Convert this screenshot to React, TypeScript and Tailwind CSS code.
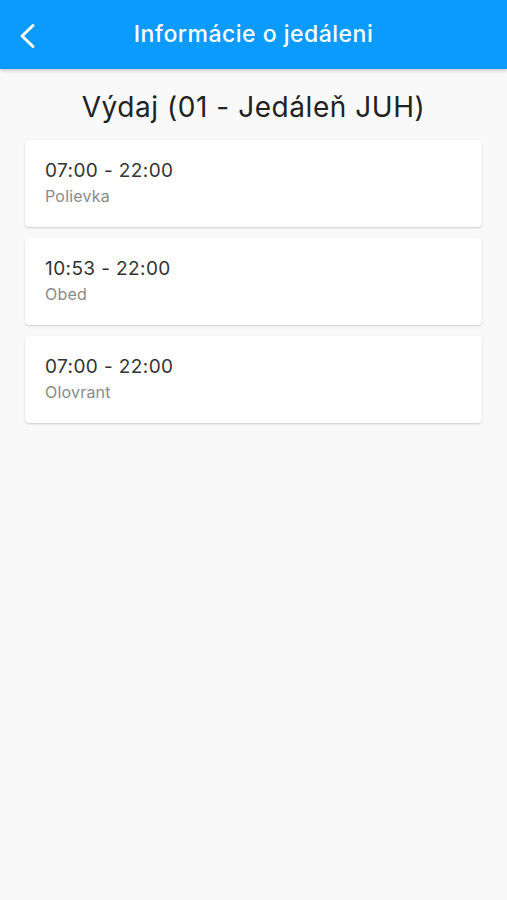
const items = [
  { time: "07:00 - 22:00", label: "Polievka" },
  { time: "10:53 - 22:00", label: "Obed" },
  { time: "07:00 - 22:00", label: "Olovrant" },
];

function ServingCard({ time, label }: { time: string; label: string }) {
  return (
    <div className="h-[87px] rounded-[4px] bg-white pl-5 pt-[19px] shadow-[0_1px_2px_rgba(0,0,0,0.18)]">
      <p className="text-[19px] leading-[24px] tracking-[0.4px] text-[#333]">{time}</p>
      <p className="mt-[3px] text-[16px] leading-[20px] tracking-[0.2px] text-[#8a8a8a]">{label}</p>
    </div>
  );
}

export default function App() {
  return (
    <div className="min-h-[900px] bg-[#f9f9f9] font-['Inter',sans-serif]">
      <header className="relative flex h-[69px] items-center justify-center bg-[#0a9bfc] shadow-[0_1px_4px_rgba(0,0,0,0.25)]">
        <button className="absolute left-[17px] top-[22px] text-white">
          <svg width="22" height="28" viewBox="0 0 22 28" fill="none">
            <path d="M16 3.5 L5 14 L16 24.5" stroke="white" strokeWidth="3" strokeLinecap="round" strokeLinejoin="round" />
          </svg>
        </button>
        <h1 className="text-[23px] font-medium tracking-[0.5px] text-white">Informácie o jedáleni</h1>
      </header>
      <h2 className="mt-[19px] text-center text-[28px] leading-[38px] tracking-[0.55px] text-[#222]">Výdaj (01 - Jedáleň JUH)</h2>
      <div className="mx-[25px] mt-[14px] flex flex-col gap-[11px]">
        {items.map((it, i) => (
          <ServingCard key={i} time={it.time} label={it.label} />
        ))}
      </div>
    </div>
  );
}
